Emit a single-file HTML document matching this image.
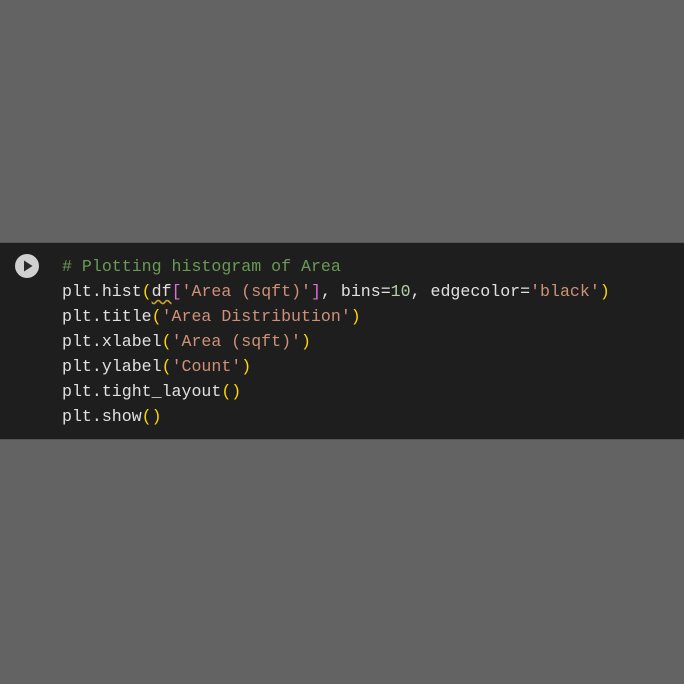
<!DOCTYPE html>
<html><head><style>
html,body{margin:0;padding:0;}
body{width:684px;height:684px;background:#636363;position:relative;overflow:hidden;}
.cell{position:absolute;left:0;top:242px;width:684px;height:198px;background:#1e1e1e;border-top:1px solid #555;border-bottom:1px solid #555;box-sizing:border-box;}
pre{position:absolute;left:62px;top:11px;margin:0;font-family:"Liberation Mono",monospace;font-size:16.6px;line-height:25px;color:#e0e0e0;}
.c{color:#6a9955}.s{color:#ce9178}.y{color:#ffd700}.p{color:#da70d6}.n{color:#b5cea8}
.u{text-decoration:underline wavy #c9a227;text-underline-offset:3px}
</style></head><body>
<div class="cell">
<svg style="position:absolute;left:14px;top:10px" width="26" height="26" viewBox="0 0 26 26"><circle cx="13" cy="13" r="12" fill="#d0d0d0"/><path d="M10 7.5 L18.5 13 L10 18.5Z" fill="#2a2a2a"/></svg>
<pre><span class="c"># Plotting histogram of Area</span>
plt.hist<span class="y">(</span><span class="u">df</span><span class="p">[</span><span class="s">'Area (sqft)'</span><span class="p">]</span>, bins=<span class="n">10</span>, edgecolor=<span class="s">'black'</span><span class="y">)</span>
plt.title<span class="y">(</span><span class="s">'Area Distribution'</span><span class="y">)</span>
plt.xlabel<span class="y">(</span><span class="s">'Area (sqft)'</span><span class="y">)</span>
plt.ylabel<span class="y">(</span><span class="s">'Count'</span><span class="y">)</span>
plt.tight_layout<span class="y">()</span>
plt.show<span class="y">()</span></pre>
</div>
</body></html>
